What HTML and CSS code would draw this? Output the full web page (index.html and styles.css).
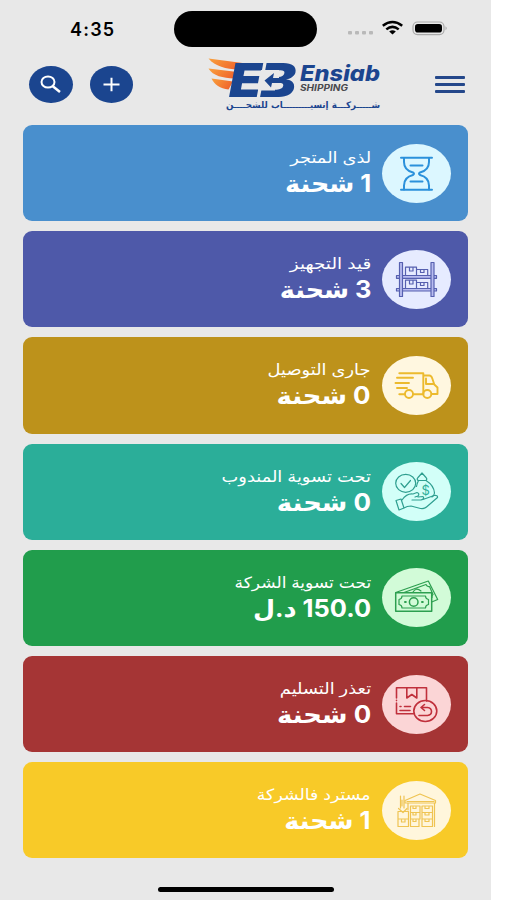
FILE: index.html
```html
<!DOCTYPE html>
<html lang="ar">
<head>
    <meta charset="UTF-8">
    <meta name="viewport" content="width=device-width, initial-scale=1.0">
    <title>Ensiab Shipping</title>
    <link rel="stylesheet" href="styles.css">
</head>
<body>

    <div class="screen">
        <div class="status">
            <span class="time">4:35</span>
            <div class="island"></div>
            <svg class="signals" width="102" height="20" viewBox="0 0 102 20">
                <g fill="#b9b9b9">
                    <rect x="2" y="12" width="4" height="3.500" rx="1"/>
                    <rect x="9" y="12" width="4" height="3.500" rx="1"/>
                    <rect x="16" y="12" width="4" height="3.500" rx="1"/>
                    <rect x="23" y="12" width="4" height="3.500" rx="1"/>
                </g>
                <g fill="none" stroke="#000" stroke-width="2.500">
                    <path d="M36.800 6.800q9.700-7.600 19.400 0"/>
                    <path d="M40.300 10.400q6.200-5 12.400 0"/>
                </g>
                <path d="M43.200 12.600q3.300-2.600 6.600 0l-3.300 3z"/>
                <rect x="67" y="3" width="31" height="12.600" rx="4.500" fill="none" stroke="#aaa" stroke-width="1.200"/>
                <rect x="69" y="5" width="27" height="8.600" rx="2.800"/>
                <path d="M99.500 7.300q2.500 2 0 4z" fill="#aaa"/>
            </svg>
        </div>

        <div class="header">
            <button class="round">
                <svg width="44" height="37" viewBox="0 0 44 37" fill="none" stroke="#fff" stroke-width="2">
                    <ellipse cx="19" cy="16" rx="6.500" ry="5.500"/>
                    <path d="M23.500 20l7.500 6" stroke-width="2.500"/>
                </svg>
            </button>
            <button class="round">
                <svg width="44" height="37" viewBox="0 0 44 37" fill="none" stroke="#fff" stroke-width="2">
                    <path d="M13.500 18.500h16M21.500 11.800v13.400"/>
                </svg>
            </button>
            <svg class="logo" width="182" height="62" viewBox="0 0 182 62">
                <defs>
                    <linearGradient id="wing" x1="0" y1="0" x2="1" y2="0.4">
                        <stop offset="0" stop-color="#f9a13c"/>
                        <stop offset="1" stop-color="#f0662d"/>
                    </linearGradient>
                </defs>
                <g fill="url(#wing)">
                    <path d="M8.500 8.500L42.500 13 38.500 19.500C26 19 15 16.500 8.500 8.500z"/>
                    <path d="M8.500 18.500L37.500 22 34 28.500C23 28 13 26 8.500 18.500z"/>
                    <path d="M11.500 28.500L33 31.500 28.500 39.500C20 38.500 14.500 35 11.500 28.500z"/>
                </g>
                <g class="mark">
                    <text x="29" y="47" textLength="33" lengthAdjust="spacingAndGlyphs">E</text>
                    <text x="60" y="47" textLength="36" lengthAdjust="spacingAndGlyphs">B</text>
                </g>
                <!-- opens the left side of the B for the arrow -->
                <path d="M61 20h18v14.500H75V40.500H58z" fill="#e8e8e8"/>
                <path d="M64.500 30.500l9.500-7.500-1 5h10v5H72l-1 4.500z" fill="#1b458f"/>
                <text class="brand" x="100" y="31" textLength="80" lengthAdjust="spacingAndGlyphs">Ensiab</text>
                <text class="brand-sub" x="100" y="40.800" textLength="48" lengthAdjust="spacingAndGlyphs">SHIPPING</text>
                <text class="brand-ar" x="26" y="58" textLength="154" lengthAdjust="spacingAndGlyphs">شـــــركـــة إنسيـــــــــاب للشحــــن</text>
            </svg>
            <div class="menu"><i></i><i></i><i></i></div>
        </div>

        <div class="cards" dir="rtl">
            <div class="card blue">
                <svg class="icon" viewBox="0 0 69 59">
                    <g stroke-width="2">
                        <path d="M19 13.700h31M19 45.700h31"/>
                        <path d="M22 14v4c0 6 3 9 9 10.500q2 1 0 2.500c-6 1.500-9 4.500-9 10.500v4M47 14v4c0 6-3 9-9 10.500q-2 1 0 2.500c6 1.500 9 4.500 9 10.500v4"/>
                        <path d="M28.500 21.500h12M28.500 37.500h12"/>
                    </g>
                </svg>
                <div class="info">
                    <span class="label">لذى المتجر</span>
                    <span class="value">1 شحنة</span>
                </div>
            </div>
            <div class="card indigo">
                <svg class="icon" viewBox="0 0 69 59">
                    <path d="M14.500 25.500h40v2.800h-40zM14.500 38.500h40v2.500h-40z" fill="#b9bdf0"/>
                    <path d="M17.500 12.500h3v34h-3zM49 12.500h3v34h-3z" fill="#b9bdf0"/>
                    <path d="M23.500 25.500v-8.300h11v8.300M34.700 19.500h11v6M23.500 38.500v-8.300h11v8.300M34.700 32.500h11v6"/>
                    <path d="M27.500 17.500v3.500h3.500v-3.500M38.500 19.500v3h3.500v-3M27.500 30.500v3.500h3.500v-3.500M38.500 32.500v3h3.500v-3"/>
                </svg>
                <div class="info">
                    <span class="label">قيد التجهيز</span>
                    <span class="value">3 شحنة</span>
                </div>
            </div>
            <div class="card gold">
                <svg class="icon" viewBox="0 0 69 59">
                    <g stroke-width="1.900">
                        <path d="M17.300 17.300h24v21M15 21.700h16M13.500 27h13.500M15 32h10M17.300 38.300H23M31.200 38.300h10M41.300 19.500h6q2 0 3 3l2 6 3.200 3v6.500h-5.800"/>
                        <path d="M44 22.500v5.500h7.500"/>
                        <circle cx="27" cy="38" r="4"/>
                        <circle cx="45.300" cy="38" r="4"/>
                    </g>
                </svg>
                <div class="info">
                    <span class="label">جارى التوصيل</span>
                    <span class="value">0 شحنة</span>
                </div>
            </div>
            <div class="card teal">
                <svg class="icon" viewBox="0 0 69 59">
                    <ellipse cx="23.700" cy="21.300" rx="10" ry="9"/>
                    <path d="M19 21.500l3.500 4 6-7"/>
                    <path d="M36 18.500q-1.500-1.500 0-3l4-4.500 4 4.500q1.500 1.500 0 3zM34.500 24.500q.5-3 2-6M44 18.500q8 5 8.500 12.500-.5 3-2.500 4"/>
                    <text class="dollar" x="39.500" y="32.500">$</text>
                    <path d="M14 38.500l5-1.500 3 9-5 2zM20 38q5-7 11-6l4-1.500q3 1 1 3.500l-3 1M30 38h9q4-1 2-3.500l-5 .5M41 37.500l11-4q4-.5 3.500 2l-11 9.500q-2 2-6 1.500L29 44q-4 0-7 2"/>
                </svg>
                <div class="info">
                    <span class="label">تحت تسوية المندوب</span>
                    <span class="value">0 شحنة</span>
                </div>
            </div>
            <div class="card green">
                <svg class="icon" viewBox="0 0 69 59">
                    <path d="M13.700 24.700h36v18.600h-36z" stroke-width="1.500"/>
                    <path d="M20 28h23.500q0 3 3 3.500v5q-3 .5-3 3.500H20q0-3-3-3.500v-5q3-.5 3-3.500z"/>
                    <circle cx="31.700" cy="34" r="4.300" stroke-width="1.500"/>
                    <path d="M23 34h.8M40 34h.8" stroke-width="2"/>
                    <path d="M13.700 24.500L46.300 13l9.400 18.500-6 2.500M22 24.500L44 16.500q1 2.500 3.500 2l3.500 8q-1.500 1-1 3M31 24q3-5 8-1"/>
                </svg>
                <div class="info">
                    <span class="label">تحت تسوية الشركة</span>
                    <span class="value">150.0 د.ل</span>
                </div>
            </div>
            <div class="card red">
                <svg class="icon" viewBox="0 0 69 59">
                    <g stroke-width="1.600">
                        <path d="M14.500 23V12.800h30V26M14.500 28v10.800h17M14.500 25.400v.2"/>
                        <path d="M24.800 13v10l5-3.500 5 3.500V13M18 31.500h1M22.500 31.500h6M18 35.500h10"/>
                        <ellipse cx="43.300" cy="36" rx="11.500" ry="10.500"/>
                        <path d="M42.500 29.500l-3.500 3 3.500 3M39 32.500h6.500q4 .5 4 4t-4 4H37"/>
                    </g>
                </svg>
                <div class="info">
                    <span class="label">تعذر التسليم</span>
                    <span class="value">0 شحنة</span>
                </div>
            </div>
            <div class="card yellow">
                <svg class="icon" viewBox="0 0 69 59">
                    <path d="M23 22v-2.500L38 13l15.500 6.500V22H23M26 22v7M52.500 22v23.500M25 20.500h27"/>
                    <path d="M16 30.500h10.500v7.500H16zM16 38h10.500v7.500H16zM28.500 38H37v7.500h-8.500zM28.500 25H38v6.500h-9.500zM28.500 31.500H38V38h-9.500zM40 25h10.500v6.500H40zM40 31.500h10.500V38H40zM40 38h10.500v7.500H40z"/>
                    <path d="M19.500 38.500v2.500h3.500v-2.500M31 38.500v2h3v-2M31 32v2h3v-2M31 25.500v2h3v-2M43 25.500v2h4v-2M43 32v2h4v-2M43 38.500v2h4v-2"/>
                    <path d="M18.500 15v12M22 15v12M16.500 27.500l4.500 4 4-4M20 19v6"/>
                </svg>
                <div class="info">
                    <span class="label">مسترد فالشركة</span>
                    <span class="value">1 شحنة</span>
                </div>
            </div>
        </div>

        <div class="home-bar"></div>
    </div>

</body>
</html>
```

FILE: styles.css
```css
body {
    margin: 0;
    background-color: #fff;
    font-family: Inter, "DejaVu Sans", sans-serif;
}

.screen {
    width: 491px;
    height: 900px;
    background-color: #e8e8e8;
    overflow: hidden;
}

.status {
    display: grid;
    grid-template-columns: 174px 143px 1fr;
    align-items: center;
    height: 58px;
}

.time {
    padding-left: 70px;
    font-size: 18px;
    font-weight: 600;
    letter-spacing: 1.2px;
}

.island {
    height: 36px;
    border-radius: 18px;
    background-color: #000;
}

.signals {
    margin-left: 29px;
}

/* header */
.header {
    display: flex;
    align-items: center;
    height: 52px;
    padding: 0 26px 0 29px;
}

.round {
    width: 43.500px;
    height: 37px;
    margin-right: 17px;
    padding: 0;
    border: none;
    border-radius: 50%;
    background-color: #1b458f;
}

.round svg {
    display: block;
}

.logo {
    margin: -6px 0 0 50px;
    overflow: visible;
}

.mark text {
    font-size: 47px;
    font-weight: 900;
    font-style: italic;
    fill: #1b458f;
}

.brand {
    font-size: 21px;
    font-weight: 800;
    font-style: italic;
    fill: #1b458f;
}

.brand-sub {
    font-size: 8.500px;
    font-weight: 700;
    font-style: italic;
    fill: #4a4a4f;
}

.brand-ar {
    font-family: "DejaVu Sans", sans-serif;
    font-size: 9px;
    font-weight: 700;
    fill: #1b458f;
}

.menu {
    display: grid;
    gap: 4px;
    width: 30px;
    margin-left: auto;
}

.menu i {
    height: 3px;
    border-radius: 1px;
    background-color: #24478a;
}

/* cards */
.cards {
    display: grid;
    gap: 10px;
    padding: 15px 23px 0;
}

.card {
    display: flex;
    align-items: center;
    gap: 11px;
    box-sizing: border-box;
    height: 96.200px;
    padding: 0 17px;
    border-radius: 9px;
    color: #fff;
}

.icon {
    width: 69px;
    height: 59px;
    border-radius: 50%;
    fill: none;
    stroke-width: 1.200;
    stroke-linecap: round;
    stroke-linejoin: round;
}

.info {
    display: flex;
    flex-direction: column;
}

/* wide arabic lettering */
.label,
.value {
    transform-origin: right;
    white-space: nowrap;
}

.label {
    height: 26px;
    font-size: 15.500px;
    line-height: 26px;
    transform: scaleX(1.15);
}

.value {
    height: 30px;
    font-size: 24px;
    font-weight: 700;
    line-height: 26px;
    transform: scaleX(1.06);
}

.dollar {
    font-size: 13px;
    direction: ltr;
    fill: #2bae99;
    stroke: none;
}

.blue { background-color: #498fcd; }
.blue .icon { background-color: #dcf7ff; stroke: #2b91db; }

.indigo { background-color: #4e59a9; }
.indigo .icon { background-color: #e6ebff; stroke: #5660b0; }
.indigo .label { transform: scaleX(1.19); }

.gold { background-color: #bd921b; }
.gold .icon { background-color: #fff7e0; stroke: #ecba2e; }

.teal { background-color: #2bae99; }
.teal .icon { background-color: #d2fff8; stroke: #2f9f90; }

.green { background-color: #219d4c; }
.green .icon { background-color: #d2fbd8; stroke: #2d9f50; }
.green .label { transform: scaleX(1.1); }

.red { background-color: #a53535; }
.red .icon { background-color: #fbd5d6; stroke: #c0303c; }

.gold .value,
.teal .value,
.red .value { transform: scaleX(1.08); }

.yellow { background-color: #f8ca28; }
.yellow .icon { background-color: #fff6dc; stroke: #efc452; }
.yellow .label { transform: scaleX(1.12); }

.home-bar {
    width: 176px;
    height: 5px;
    margin: 29px auto 0;
    border-radius: 3px;
    background-color: #000;
}
```
